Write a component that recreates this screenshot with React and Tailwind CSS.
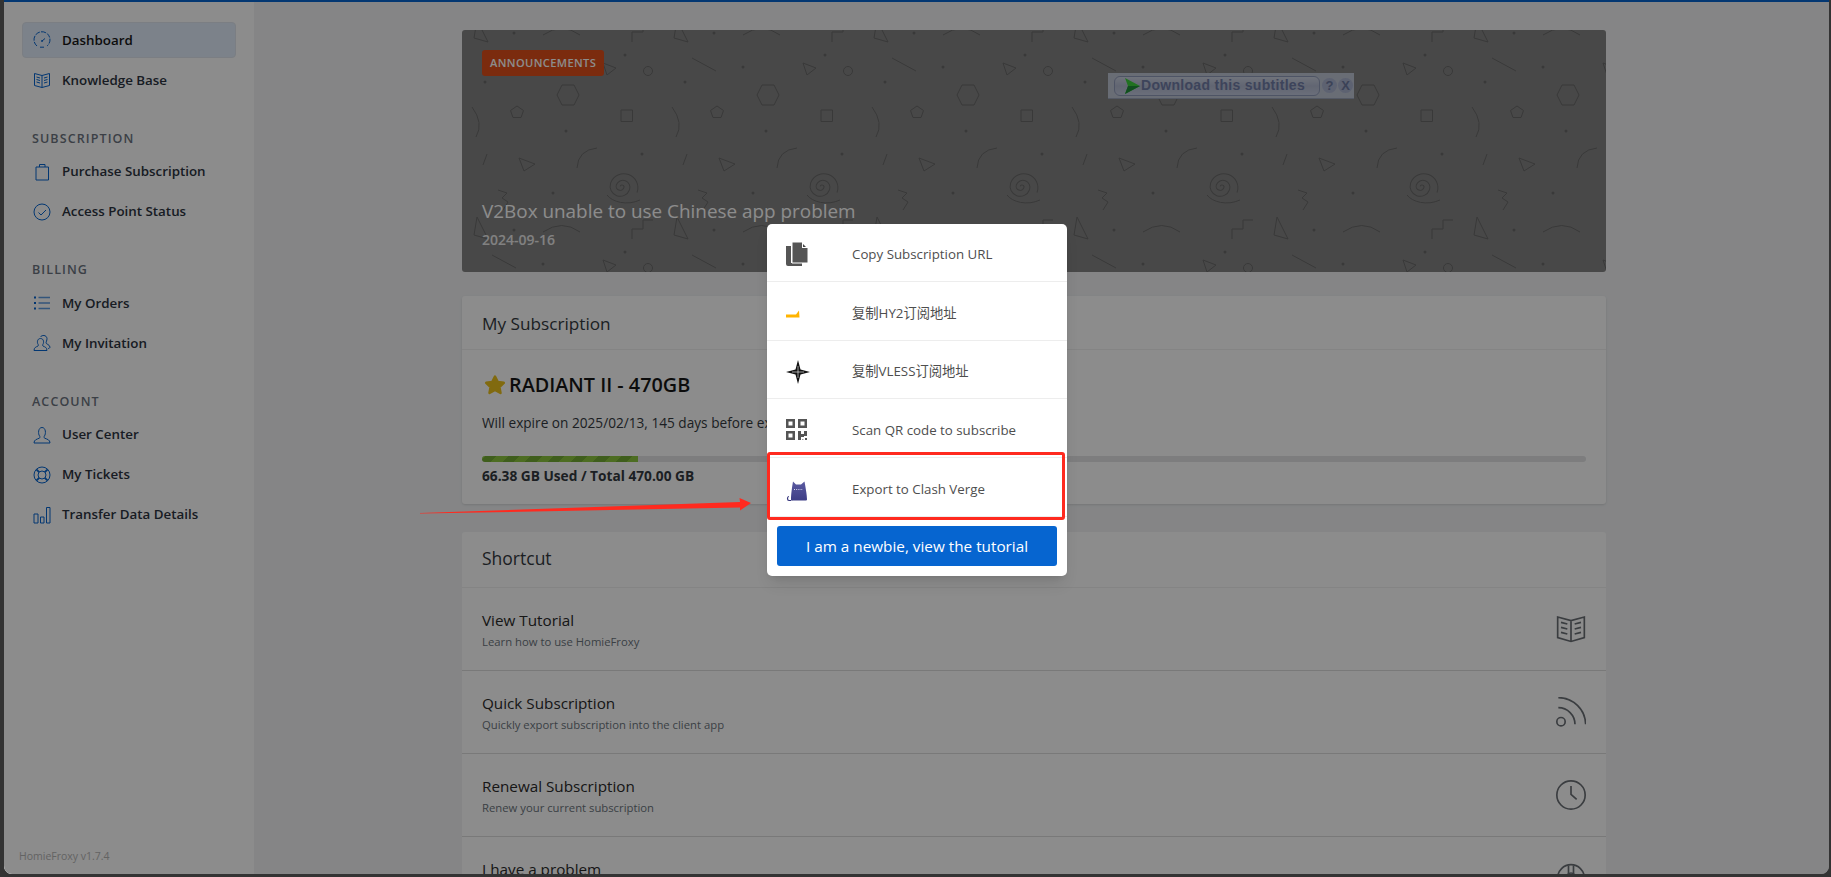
const ff = { fontFamily: '"Open Sans", "Noto Sans CJK SC", sans-serif' };

const Ico = ({ children, size = 18, className = "" }) => (
  <svg width={size} height={size} viewBox="0 0 18 18" fill="none" stroke="currentColor" strokeWidth="1" className={className}>
    {children}
  </svg>
);

const sideIcons = {
  gauge: (
    <>
      <path d="M4 15a8 8 0 1 1 10 0" strokeDasharray="5 1.2" />
      <path d="M7 16.2h4M9 10l3-2.5" />
      <circle cx="9" cy="10" r=".6" />
    </>
  ),
  book: (
    <>
      <path d="M1.5 2.5 9 4.5l7.5-2v12l-7.5 2-7.5-2zM9 4.5v12" />
      <path d="M3.5 6 7 7M3.5 8.5 7 9.5M3.5 11 7 12M11 7l3.5-1M11 9.5l3.5-1M11 12l3.5-1" />
    </>
  ),
  bag: (
    <>
      <path d="M3 4h12.5v13H3z" />
      <path d="M6.5 4V1.5h5.5V4" />
    </>
  ),
  check: (
    <>
      <circle cx="9" cy="9" r="8" />
      <path d="m5.5 9.5 2.5 2.5 5-5" />
    </>
  ),
  list: (
    <>
      <path d="M5.5 3.5H17M5.5 9H17M5.5 14.5H17" strokeOpacity=".65" strokeWidth="1.4" />
      <path d="M1 2.5h2v2H1zM1 8h2v2H1zM1 13.5h2v2H1z" fill="currentColor" stroke="none" />
    </>
  ),
  users: (
    <>
      <path d="M1 16.5c0-3 2-3.500 4-4.500.6-.4.4-1.300 0-1.800-1-1.400-1-5.700 2.500-5.700S11 8.800 10 10.200c-.4.500-.6 1.400 0 1.800 2 1 4 1.500 4 4.500z" />
      <path d="M7.500 3c1-2 6-2.500 6.500 1.500 0 2-1 3.500-1 4.500s3.500 1.500 4 4c0 1-1 1.500-2 1.500" />
    </>
  ),
  user: (
    <path d="M1 17c0-3.300 2.800-3.700 5.300-4.800.8-.4.800-1.500.2-2.300C5 8 5 1.500 9 1.500S13 8 11.500 9.900c-.6.800-.6 1.900.2 2.300 2.500 1.100 5.300 1.500 5.300 4.800z" />
  ),
  support: (
    <>
      <circle cx="9" cy="9" r="8" />
      <circle cx="9" cy="9" r="4" />
      <path d="m3.300 3.300 2.900 2.900M14.700 3.300l-2.900 2.900M3.300 14.700l2.900-2.900M14.700 14.700l-2.900-2.900" strokeWidth="1.800" />
    </>
  ),
  bars: (
    <>
      <path d="M1 8h4v9H1zM7.500 11h3.500v6H7.500zM13.500 1.500H17V17h-3.500z" />
    </>
  ),
};

const SideItem = ({ icon, label, active }) => (
  <div className={`flex items-center h-[36px] rounded-[4px] text-[13.350px] font-semibold ${active ? "pl-[10px] bg-[#e2edfb] border border-[#e0e6ee] text-[#171717]" : "pl-[11px] text-[#2c3340]"}`}>
    <span className="w-[29px] text-[#0665d0] flex">
      <Ico>{sideIcons[icon]}</Ico>
    </span>
    {label}
  </div>
);

const SideHead = ({ children }) => (
  <div className="mt-[29.500px] mb-[4px] h-[22px] leading-[22px] pl-[10px] text-[12.500px] font-semibold tracking-[1.100px] text-[#6c7480]">{children}</div>
);

const Pattern = () => (
  <svg className="absolute inset-0 w-full h-full" xmlns="http://www.w3.org/2000/svg">
    <defs>
      <pattern id="shapes" x="0" y="0" width="200" height="197" patternUnits="userSpaceOnUse">
        <g fill="none" stroke="#686868" strokeWidth="1">
          <path d="M15 187 26 209 12 205zM15-10 26 12 12 8z" />
          <path d="M170 12V2h11v-9h10M170 209v-10h11v-9h10" />
          <path d="M81 5Q100-8 118 5M81 202Q100 189 118 202" />
          <path d="m141 33 13 5-9 7z" />
          <circle cx="186" cy="41" r="4.500" />
          <path d="M30 28 54 41" />
          <path d="m95 65 5-10h12l5 10-5 10h-12z" />
          <path d="m55 76 6.500 4.500-2.500 7h-8l-2.500-7z" />
          <path d="M159 80h11.500v11.500H159z" />
          <path d="M10 77Q22 93 14 107" />
          <path d="m25 124-4 11" />
          <path d="m57 128 16 6-11 7z" />
          <path d="M135 118Q116 120 115 138" />
          <path d="M158 157a2 2 0 0 1 4 0a4 4 0 0 1-8 0a7 7 0 0 1 14 0a10 10 0 0 1-20 0a14 14 0 0 1 28 0" transform="rotate(20 160 157)" />
          <path d="M145 165C150 172 165 176 178 170" />
          <path d="m36 160 9 3-5 5 6 4-5 8" />
        </g>
        <g fill="#686868">
          <circle cx="52" cy="3" r="1.500" />
          <circle cx="81" cy="37" r="1.500" />
          <circle cx="23" cy="52" r="1.500" />
          <circle cx="104" cy="101" r="1.500" />
          <circle cx="180" cy="124" r="1.500" />
          <circle cx="91" cy="163" r="1.500" />
          <circle cx="163" cy="25" r="1.500" />
        </g>
      </pattern>
    </defs>
    <rect width="100%" height="100%" fill="url(#shapes)" />
  </svg>
);

const SubtitleBar = () => (
  <div className="absolute left-[646px] top-[43px] w-[246px] h-[26px] bg-[#c0c6d6] border-b border-[#9aa2b8] flex items-center pl-[6px] pr-[1px] gap-[1px]" style={{ fontFamily: '"Liberation Sans", sans-serif' }}>
    <div className="w-[206px] mr-[1px] shrink-0 h-[20px] rounded-[6px] border border-[#8f9ab8] bg-gradient-to-b from-[#ccd2e2] via-[#b2bad0] to-[#c2c9de] flex items-center pl-[9px] gap-[1px]">
      <svg width="16" height="16" viewBox="0 0 16 16">
        <path d="M1 0 16 8 1 16 4 8z" fill="#3dcf3d" />
        <path d="M4 8 1 16 16 8z" fill="#1f8f3a" />
      </svg>
      <span className="text-[14px] font-bold text-[#707ca6] tracking-[.3px] whitespace-nowrap">Download this subtitles</span>
    </div>
    <span className="w-[15px] h-[15px] shrink-0 rounded-full bg-[#a9b2ce] text-[#6c789e] text-[13px] font-bold leading-[15px] text-center">?</span>
    <span className="w-[15px] h-[15px] shrink-0 rounded-full bg-[#a9b2ce] text-[#6c789e] text-[13px] font-bold leading-[15px] text-center">X</span>
  </div>
);

const shortcutIcons = {
  book: (
    <>
      <path d="M1 1.800 9 4l8-2.200v12.400L9 16.500l-8-2.300zM9 4v12.500" />
      <path d="M3 5l3.800 1M3 8l3.800 1M3 11l3.800 1M11.200 6 15 5M11.200 9 15 8M11.200 12 15 11" />
    </>
  ),
  rss: (
    <>
      <circle cx="3" cy="14.800" r="2.500" />
      <path d="M1.400.4A16.400 16.400 0 0 1 17.800 16.400M1.400 6.400A10 10 0 0 1 11.400 16.400" />
    </>
  ),
  clock: (
    <>
      <circle cx="9" cy="9" r="8.500" />
      <path d="M9 3.600v5l3.400 3" />
    </>
  ),
  wheel: (
    <>
      <circle cx="9" cy="9" r="8" />
      <circle cx="9" cy="9" r="3" />
      <path d="M7.500 1.500v5M10.500 1.500v5M2 12l4.500-1.500M16 12l-4.500-1.500M9 12v5" />
    </>
  ),
};

const Shortcut = ({ title, sub, icon }) => (
  <div className="h-[83px] shrink-0 border-b border-[#dcdcdc] flex justify-between items-center px-[20px]">
    <div className="mt-[1px]">
      <div className="text-[15.250px] leading-[20px] text-[#2a2a2a]">{title}</div>
      {sub ? <div className="text-[11.300px] leading-[16px] mt-[4px] text-[#6c757d]">{sub}</div> : <div className="h-[20px]" />}
    </div>
    <Ico size={30} className="text-[#6a6f75]">{shortcutIcons[icon]}</Ico>
  </div>
);

const ModalRow = ({ icon, label, h = "h-[59px]" }) => (
  <div className={`${h} pt-[5px] flex items-center border-b border-[#ededed] text-[13.300px] text-[#4e4e4e]`}>
    <span className="w-[85px] pl-[18px] flex items-center">{icon}</span>
    {label}
  </div>
);

const CopyIcon = (
  <svg width="24" height="26" viewBox="0 0 24 26" className="mb-[2px]">
    <path d="M1 5h5v17h11v3H3a2 2 0 0 1-2-2z" fill="#555" />
    <path d="M7 1h10l6 6v15H7z" fill="#555" stroke="#fff" strokeWidth="1" />
    <path d="M17 1v6h6z" fill="#fff" />
    <path d="M18 3v3h3z" fill="#444" />
  </svg>
);

const Hy2Icon = (
  <svg width="24" height="26" viewBox="0 0 24 26" className="mb-[4px]">
    <path d="M1 15.500h10L14 11.500l.5 7H1z" fill="#ffb400" />
  </svg>
);

const VlessIcon = (
  <svg width="26" height="26" viewBox="0 0 26 26">
    <path d="M13 1 15.500 10.500 25 13 15.500 15.500 13 25 10.500 15.500 1 13 10.500 10.500z" fill="#111" />
    <path d="M13 7v12M7 13h12" stroke="#fff" strokeWidth=".6" />
  </svg>
);

const QrIcon = (
  <svg width="24" height="24" viewBox="0 0 24 24" className="mb-[2px]">
    <path fillRule="evenodd" d="M1 1h9v9H1zM3.500 3.500v4h4v-4zM13 1h9v9h-9zM15.500 3.500v4h4v-4zM1 13h9v9H1zM3.500 15.500v4h4v-4z" fill="#555" />
    <path d="M13 13h3v3h3v-3h3v5h-3v1h-3v3h-3zM20 20h2v2h-2z" fill="#555" />
    <path d="M17 21h1.500v1H17z" fill="#999" />
  </svg>
);

const CatIcon = (
  <svg width="24" height="24" viewBox="0 0 24 24" className="mt-[4px] ml-[1px]">
    <defs>
      <linearGradient id="cat" x1="0" y1="0" x2="0" y2="1">
        <stop offset="0" stopColor="#5a5aa0" />
        <stop offset="1" stopColor="#3d3d86" />
      </linearGradient>
    </defs>
    <path d="M7 1.500 10 4.500h5L18.500 1.500C19.500 7 21 15 21 19.500a1 1 0 0 1-1 1H6.500A1 1 0 0 1 5 19.500C5 15 6 7 7 1.500z" fill="url(#cat)" />
    <path d="M8 9.500h9" stroke="#d8d8f0" strokeWidth="1" strokeDasharray="1 1.200" />
    <path d="M5 20.500H3c-2 0-2-4 0-4" fill="none" stroke="#35357c" strokeWidth="1.200" />
  </svg>
);

export default function App() {
  return (
    <div className="relative w-full h-[877px] bg-[#333333] overflow-hidden text-[#212529]" style={ff}>
      <div className="relative ml-[4px] mr-[2px] h-[874px] rounded-b-[8px] overflow-hidden flex flex-col bg-[#f2f3f5]">
        <div className="h-[2px] shrink-0 bg-[#0665d0]" />
        <div className="flex flex-1 min-h-0">
          <aside className="relative w-[250px] shrink-0 bg-white pl-[18px] pr-[18px] pt-[20px]">
            <SideItem icon="gauge" label="Dashboard" active />
            <div className="mt-[4px]"><SideItem icon="book" label="Knowledge Base" /></div>
            <SideHead>SUBSCRIPTION</SideHead>
            <div className="flex flex-col gap-[4px]">
              <SideItem icon="bag" label="Purchase Subscription" />
              <SideItem icon="check" label="Access Point Status" />
            </div>
            <SideHead>BILLING</SideHead>
            <div className="flex flex-col gap-[4px]">
              <SideItem icon="list" label="My Orders" />
              <SideItem icon="users" label="My Invitation" />
            </div>
            <SideHead>ACCOUNT</SideHead>
            <div className="flex flex-col gap-[4px]">
              <SideItem icon="user" label="User Center" />
              <SideItem icon="support" label="My Tickets" />
              <SideItem icon="bars" label="Transfer Data Details" />
            </div>
            <div className="absolute left-[15px] bottom-[9px] text-[10.500px] text-[#b5b5b5]">HomieFroxy v1.7.4</div>
          </aside>
          <main className="flex-1 min-w-0 pl-[208px] pt-[28px]">
            <div className="w-[1144px] flex flex-col gap-[24px]">
              <section className="relative h-[242px] bg-[#838383] rounded-[3px] overflow-hidden">
                <Pattern />
                <SubtitleBar />
                <div className="absolute left-[20px] top-[20px] h-[26px] px-[8px] rounded-[3px] bg-[#e04f1a] text-white text-[11.100px] font-semibold tracking-[.4px] leading-[26px]">ANNOUNCEMENTS</div>
                <div className="absolute left-[20px] top-[167px] text-[18.900px] leading-[28px] text-white">V2Box unable to use Chinese app problem</div>
                <div className="absolute left-[20px] top-[200px] text-[14px] leading-[20px] font-semibold text-white/85">2024-09-16</div>
              </section>
              <section className="h-[208px] bg-white rounded-[3px] shadow-sm">
                <div className="h-[54px] pt-[2px] px-[20px] flex items-center border-b border-[#f0f0f0] text-[17.200px] text-[#343a40]">My Subscription</div>
                <div className="px-[20px]">
                  <div className="mt-[20px] flex items-center h-[30px] text-[19.800px] font-semibold text-[#171717]">
                    <svg width="24" height="24" viewBox="0 0 24 24" className="ml-[1px] mr-[2px]">
                      <path d="M12 3.500 14.800 9l6 .8-4.400 4.200 1.100 6L12 17l-5.500 3 1.100-6-4.400-4.200 6-.8z" fill="#ecc21c" stroke="#ecc21c" strokeWidth="2.500" strokeLinejoin="round" />
                    </svg>
                    RADIANT II - 470GB
                  </div>
                  <div className="mt-[13px] text-[13.650px] leading-[20px] text-[#343a40]">Will expire on 2025/02/13, 145 days before expiration</div>
                  <div className="mt-[23px] h-[6px] rounded-full bg-[#e3e4e6] overflow-hidden">
                    <div className="h-full w-[14.120%] bg-[repeating-linear-gradient(-45deg,#8cc63f_0,#8cc63f_8px,#74ab34_8px,#74ab34_16px)]" />
                  </div>
                  <div className="mt-[4px] text-[13.700px] leading-[20px] font-bold text-[#343a40]">66.38 GB Used / Total 470.00 GB</div>
                </div>
              </section>
              <section className="mt-[4px] bg-white rounded-[3px] flex flex-col">
                <div className="h-[56px] pb-[2px] px-[20px] flex items-center border-b border-[#f0f0f0] text-[17.500px] text-[#343a40]">Shortcut</div>
                <Shortcut title="View Tutorial" sub="Learn how to use HomieFroxy" icon="book" />
                <Shortcut title="Quick Subscription" sub="Quickly export subscription into the client app" icon="rss" />
                <Shortcut title="Renewal Subscription" sub="Renew your current subscription" icon="clock" />
                <Shortcut title="I have a problem" icon="wheel" />
              </section>
            </div>
          </main>
        </div>
        <div className="absolute inset-0 bg-black/45" />
      </div>

      <div className="absolute left-[767px] top-[224px] w-[300px] h-[352px] bg-white rounded-[5px] shadow-lg">
        <ModalRow icon={CopyIcon} label="Copy Subscription URL" h="h-[58px]" />
        <ModalRow icon={Hy2Icon} label="复制HY2订阅地址" />
        <ModalRow icon={VlessIcon} label="复制VLESS订阅地址" h="h-[58px]" />
        <ModalRow icon={QrIcon} label="Scan QR code to subscribe" />
        <ModalRow icon={CatIcon} label="Export to Clash Verge" />
        <div className="mx-[10px] mt-[9px] h-[40px] rounded-[3px] bg-[#0665d0] text-white text-[15.300px] flex items-center justify-center">I am a newbie, view the tutorial</div>
      </div>

      <div className="absolute left-[767px] top-[452px] w-[298px] h-[68px] border-[3px] border-[#ff2a1f] rounded-[3px]" />
      <svg className="absolute left-[415px] top-[490px]" width="345" height="30" viewBox="0 0 345 30">
        <path d="M5 23 325 12 324.500 8 336 13 325 20.500 325 17.500 5 23.600z" fill="#ff2a1f" />
      </svg>
    </div>
  );
}
